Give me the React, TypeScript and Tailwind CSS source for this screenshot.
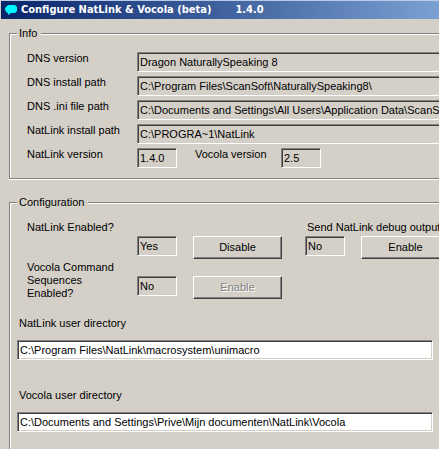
import { useId, type ReactNode } from 'react';

const sunken =
  'h-5 rounded-none border border-t-[#808080] border-l-[#808080] border-b-white border-r-white pl-0.5 shadow-[inset_1px_1px_#404040,inset_-1px_-1px_#d4d0c8] outline-none';

const caption = 'text-[11px] leading-[13px]';

function Group({ title, className, children }: { title: string; className: string; children: ReactNode }) {
  return (
    <fieldset
      className={`ml-[9px] min-w-0 border-t border-l border-[#808080] shadow-[inset_1px_1px_white,0_1px_white] ${className}`}
    >
      <legend className="ml-[7px] bg-[#d4d0c8] pr-1 pl-0.5 text-[11px] leading-[13px]">{title}</legend>
      {children}
    </fieldset>
  );
}

function InfoRow({ label, value }: { label: string; value: string }) {
  const id = useId();
  return (
    <div className="flex">
      <label htmlFor={id} className={`w-[110px] shrink-0 ${caption}`}>{label}</label>
      <input
        id={id}
        readOnly
        value={value}
        className={`min-w-0 flex-1 border-r-0 bg-[#d4d0c8] text-[11px] ${sunken}`}
      />
    </div>
  );
}

function Short({ id, value }: { id: string; value: string }) {
  return (
    <input
      id={id}
      readOnly
      value={value}
      className={`w-10 shrink-0 bg-[#d4d0c8] text-[11px] ${sunken}`}
    />
  );
}

function PushButton({ disabled, children }: { disabled?: boolean; children: ReactNode }) {
  return (
    <button
      type="button"
      disabled={disabled}
      className="h-[23px] w-[89px] shrink-0 border border-t-white border-r-[#404040] border-b-[#404040] border-l-white text-[11px] leading-[13px] shadow-[inset_-1px_-1px_#808080] disabled:text-[#808080] disabled:[text-shadow:1px_1px_white]"
    >
      {children}
    </button>
  );
}

function Toggle({ label, value, action, disabled }: { label: string; value: string; action: string; disabled?: boolean }) {
  const id = useId();
  return (
    <>
      <label htmlFor={id} className={`w-[110px] shrink-0 pr-3 ${caption}`}>{label}</label>
      <div className="flex gap-4 pt-[15px]">
        <Short id={id} value={value} />
        <PushButton disabled={disabled}>{action}</PushButton>
      </div>
    </>
  );
}

function Directory({ label, value }: { label: string; value: string }) {
  const id = useId();
  return (
    <div className="flex flex-col gap-[10px]">
      <label htmlFor={id} className={`pl-0.5 ${caption}`}>{label}</label>
      <input
        id={id}
        defaultValue={value}
        className={`w-full bg-white text-[11px] ${sunken}`}
      />
    </div>
  );
}

export default function App() {
  const versionId = useId();
  const vocolaId = useId();
  const debugId = useId();
  return (
    <main className="flex min-h-screen flex-col overflow-hidden border-l border-[#d4d0c8] bg-[#d4d0c8] font-['Liberation_Sans',Arial,sans-serif] text-black">
      <header className="flex h-[19px] items-center border-t border-[#b9cbe6] bg-linear-to-r from-[#0a246a] to-[#7ba0d2] pl-1 font-['DejaVu_Sans_Condensed','DejaVu_Sans',sans-serif] text-[11px] font-bold text-white">
        <svg width="13" height="12" viewBox="0 0 13 12" className="mr-[3px] shrink-0" aria-hidden="true">
          <path d="M3 1h7l2 2v4l-2 2H6l-3 2V9L1 8V7L0 6V4l1-1z" fill="#00f6ff" />
        </svg>
        <h1 className="whitespace-pre">Configure NatLink &amp; Vocola (beta)</h1>
        <span className="ml-6">1.4.0</span>
      </header>

      <div className="-ml-px flex flex-1 flex-col gap-[17px] pt-2">
        <Group title="Info" className="border-b">
          <div className="flex flex-col gap-1 pt-3 pb-[10px] pl-[17px]">
            <InfoRow label="DNS version" value="Dragon NaturallySpeaking 8" />
            <InfoRow label="DNS install path" value="C:\Program Files\ScanSoft\NaturallySpeaking8\" />
            <InfoRow
              label="DNS .ini file path"
              value="C:\Documents and Settings\All Users\Application Data\ScanSoft"
            />
            <InfoRow label="NatLink install path" value="C:\PROGRA~1\NatLink" />
            <div className="flex">
              <label htmlFor={versionId} className={`w-[110px] shrink-0 ${caption}`}>NatLink version</label>
              <Short id={versionId} value="1.4.0" />
              <label htmlFor={vocolaId} className={`w-[104px] shrink-0 pl-[18px] ${caption}`}>Vocola version</label>
              <Short id={vocolaId} value="2.5" />
            </div>
          </div>
        </Group>

        <Group title="Configuration" className="flex-1">
          <div className="flex h-[52px] pt-3 pl-[17px]">
            <Toggle label="NatLink Enabled?" value="Yes" action="Disable" />
            <div className="ml-[23px] shrink-0">
              <label htmlFor={debugId} className={`block h-[15px] pl-0.5 whitespace-nowrap ${caption}`}>
                Send NatLink debug output
              </label>
              <div className="flex gap-4">
                <Short id={debugId} value="No" />
                <PushButton>Enable</PushButton>
              </div>
            </div>
          </div>
          <div className="flex pl-[17px]">
            <Toggle label="Vocola Command Sequences Enabled?" value="No" action="Enable" disabled />
          </div>
          <div className="flex flex-col gap-[29px] pt-[17px] pr-1.5 pb-4 pl-[7px]">
            <Directory label="NatLink user directory" value="C:\Program Files\NatLink\macrosystem\unimacro" />
            <Directory
              label="Vocola user directory"
              value="C:\Documents and Settings\Prive\Mijn documenten\NatLink\Vocola"
            />
          </div>
        </Group>
      </div>
    </main>
  );
}
